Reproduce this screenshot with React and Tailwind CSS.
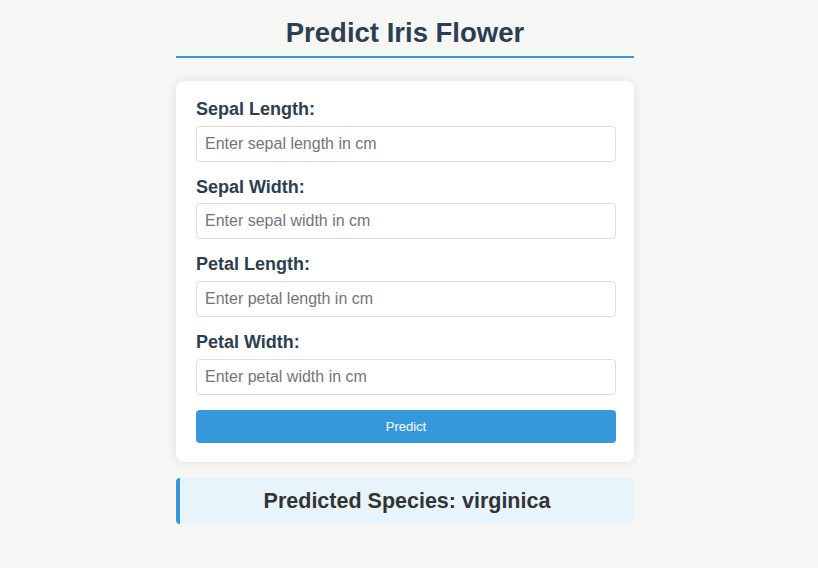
// Iris flower prediction form

import React, { useState } from 'react';

const fields = [
  { id: 'sepal_length', label: 'Sepal Length:', placeholder: 'Enter sepal length in cm' },
  { id: 'sepal_width', label: 'Sepal Width:', placeholder: 'Enter sepal width in cm' },
  { id: 'petal_length', label: 'Petal Length:', placeholder: 'Enter petal length in cm' },
  { id: 'petal_width', label: 'Petal Width:', placeholder: 'Enter petal width in cm' },
];

const App = () => {
  const [values, setValues] = useState({});
  const [species] = useState('virginica');

  const handleChange = (id) => (e) => {
    setValues((prev) => ({ ...prev, [id]: e.target.value }));
  };

  return (
    <div
      className="min-h-screen bg-[#f6f6f5] pt-[17px] pr-[8px]"
      style={{ fontFamily: '"Liberation Sans", Arial, sans-serif' }}
    >
      <div className="w-[458px] mx-auto">
        <h1 className="text-[27.5px] leading-[32px] font-bold text-[#2c3e50] text-center pb-[7px] border-b-2 border-[#3498db]">
          Predict Iris Flower
        </h1>

        <form
          className="mt-[23px] bg-white rounded-[8px] shadow-[0_0_10px_rgba(0,0,0,0.1)] px-[20px] pt-[18px] pb-[19px]"
          onSubmit={(e) => e.preventDefault()}
        >
          {fields.map((f) => (
            <div key={f.id} className="mb-[15px]">
              <label
                htmlFor={f.id}
                className="block text-[18px] leading-[21.7px] font-bold text-[#2c3e50] mb-[5px]"
              >
                {f.label}
              </label>
              <input
                id={f.id}
                type="text"
                value={values[f.id] || ''}
                onChange={handleChange(f.id)}
                placeholder={f.placeholder}
                className="block w-[420px] h-[36px] px-[8px] text-[16px] border border-[#dddddd] rounded-[4px] text-[#333] placeholder:text-[#757575] outline-none"
              />
            </div>
          ))}

          <button
            type="submit"
            className="block w-[420px] h-[33px] mt-[15px] bg-[#3498db] text-white text-[13px] rounded-[4px]"
          >
            Predict
          </button>
        </form>

        <div className="mt-[16px] h-[46px] flex items-center justify-center bg-[#e8f4fc] border-l-4 border-[#3498db] rounded-[4px]">
          <h2 className="text-[21.5px] font-bold text-[#333333]">Predicted Species: {species}</h2>
        </div>
      </div>
    </div>
  );
};

export default App;
